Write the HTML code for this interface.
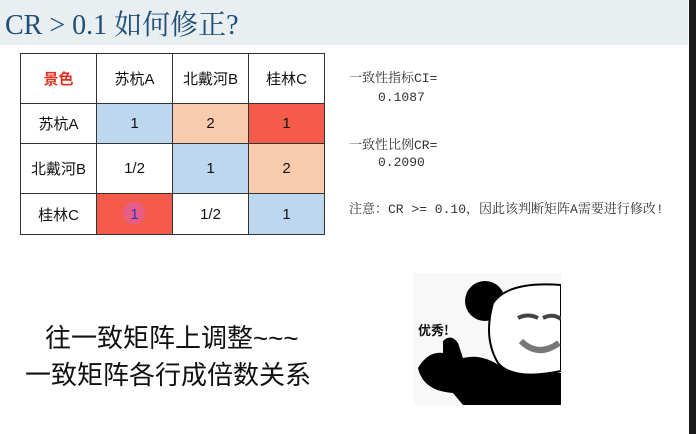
<!DOCTYPE html>
<html><head><meta charset="utf-8"><style>
body{margin:0;width:696px;height:434px;background:#fff;position:relative;overflow:hidden;font-family:"Liberation Sans","Noto Sans CJK SC",sans-serif;}
.hdr{position:absolute;left:0;top:0;width:688px;height:45px;background:#e9eff0;}
.title{position:absolute;left:5px;top:3px;font-family:"Liberation Serif","Noto Serif CJK SC",serif;font-size:28px;color:#1f4e79;white-space:nowrap;}
.bar{position:absolute;left:689px;top:0;width:7px;height:434px;background:#1a1a1a;}
table{position:absolute;left:20px;top:53px;border-collapse:collapse;}
td{border:1px solid #333;width:75px;text-align:center;font-size:15px;color:#111;padding:0;}
.b{background:#bdd7ee}.p{background:#f8cbad}.r{background:#f55b4b}
.rt{position:absolute;left:349px;font-family:"Liberation Mono","Noto Serif CJK SC",monospace;font-size:13px;color:#333;white-space:nowrap;}
.big{position:absolute;font-size:26px;color:#111;white-space:nowrap;}
</style></head><body>
<div class="hdr"></div>
<div class="title">CR &gt; 0.1 如何修正?</div>
<div class="bar"></div>
<table>
<tr style="height:50px"><td style="color:#e03020;font-weight:bold">景色</td><td>苏杭A</td><td>北戴河B</td><td>桂林C</td></tr>
<tr style="height:40px"><td>苏杭A</td><td class="b">1</td><td class="p">2</td><td class="r">1</td></tr>
<tr style="height:50px"><td>北戴河B</td><td>1/2</td><td class="b">1</td><td class="p">2</td></tr>
<tr style="height:41px"><td>桂林C</td><td class="r" style="position:relative"><span style="position:absolute;left:26px;top:8px;width:22px;height:22px;border-radius:50%;background:#e060a0;opacity:.7"></span><span style="position:relative;color:#3030c0">1</span></td><td>1/2</td><td class="b">1</td></tr>
</table>
<div class="rt" style="top:67px">一致性指标CI=</div>
<div class="rt" style="top:90px;left:378px">0.1087</div>
<div class="rt" style="top:134px">一致性比例CR=</div>
<div class="rt" style="top:155px;left:378px">0.2090</div>
<div class="rt" style="top:198px">注意：CR &gt;= 0.10，因此该判断矩阵A需要进行修改!</div>
<div class="big" style="left:45px;top:318px">往一致矩阵上调整~~~</div>
<div class="big" style="left:25px;top:355px">一致矩阵各行成倍数关系</div>
<svg style="position:absolute;left:413px;top:273px" width="148" height="132" viewBox="0 0 148 132">
<rect width="148" height="132" fill="#f8f8f8"/>
<circle cx="72" cy="28" r="20" fill="#000"/>
<path d="M5 95 Q15 78 30 80 L30 68 Q38 60 45 70 L50 85 Q70 80 90 95 L148 100 L148 132 L50 132 L40 120 Q10 118 5 95Z" fill="#000"/>
<path d="M80 30 Q95 8 148 12 L148 98 Q100 108 85 90 Q70 65 80 30Z" fill="#fff" stroke="#000" stroke-width="2"/>
<path d="M105 45 Q115 40 125 45 M130 45 Q140 40 148 46" stroke="#444" stroke-width="4" fill="none"/>
<path d="M108 68 Q125 85 146 70" stroke="#777" stroke-width="6" fill="none"/>
<text x="5" y="62" font-size="13" font-weight="bold" font-family="Noto Sans CJK SC,sans-serif" fill="#111">优秀!</text>
</svg>
</body></html>
